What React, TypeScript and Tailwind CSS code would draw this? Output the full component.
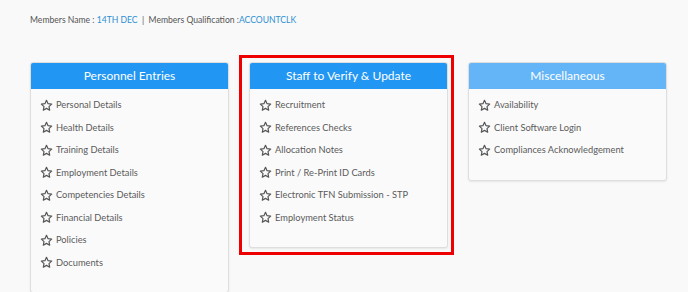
import React from "react";

const Star = () => (
  <svg width="13" height="13" viewBox="0 0 24 24" fill="none" stroke="#555" strokeWidth="2.2" strokeLinejoin="round" className="shrink-0">
    <path d="M12 2.5l2.9 6.1 6.6.8-4.9 4.6 1.3 6.6L12 17.3l-5.9 3.3 1.3-6.6-4.9-4.6 6.6-.8z" />
  </svg>
);

function Card({ title, items, light }: { title: string; items: string[]; light?: boolean }) {
  return (
    <div className="w-[199px] rounded-[3px] border border-[#dedede] bg-[#fafafa] shadow-[0_1px_2px_rgba(0,0,0,0.08)] overflow-hidden">
      <div className={`h-[26px] flex items-center justify-center text-white text-[12px] ${light ? "bg-[#64b5f7]" : "bg-[#2196f3]"}`}>
        {title}
      </div>
      <div className="pt-[5px] pb-[18px] pl-[9px] pr-[10px]">
        {items.map((item, index) => (
          <div key={index} className="h-[22.5px] flex items-center gap-[3px] text-[9.3px] text-[#5a5a5a]">
            <Star />
            <span>{item}</span>
          </div>
        ))}
      </div>
    </div>
  );
}

export default function App() {
  const personnel = [
    "Personal Details",
    "Health Details",
    "Training Details",
    "Employment Details",
    "Competencies Details",
    "Financial Details",
    "Policies",
    "Documents",
  ];
  const staff = [
    "Recruitment",
    "References Checks",
    "Allocation Notes",
    "Print / Re-Print ID Cards",
    "Electronic TFN Submission - STP",
    "Employment Status",
  ];
  const misc = ["Availability", "Client Software Login", "Compliances Acknowledgement"];

  return (
    <div className="w-[688px] h-[292px] bg-[#f9f9f9] overflow-hidden font-['Lato',sans-serif]">
      <div className="pl-[30px] pt-[14px] h-[62px] text-[8.6px] text-[#555]">
        Members Name : <span className="text-[#2e8fd3]">14TH DEC</span>&nbsp; | &nbsp;Members Qualification :
        <span className="text-[#2e8fd3]">ACCOUNTCLK</span>
      </div>
      <div className="pl-[30px] flex items-start gap-[20px]">
        <Card title="Personnel Entries" items={personnel} />
        <div className="relative">
          <Card title="Staff to Verify & Update" items={staff} />
          <div className="absolute left-[-10px] right-[-6px] top-[-7px] bottom-[-7px] border-[3px] border-[#ee0000] pointer-events-none" />
        </div>
        <Card title="Miscellaneous" items={misc} light />
      </div>
    </div>
  );
}
